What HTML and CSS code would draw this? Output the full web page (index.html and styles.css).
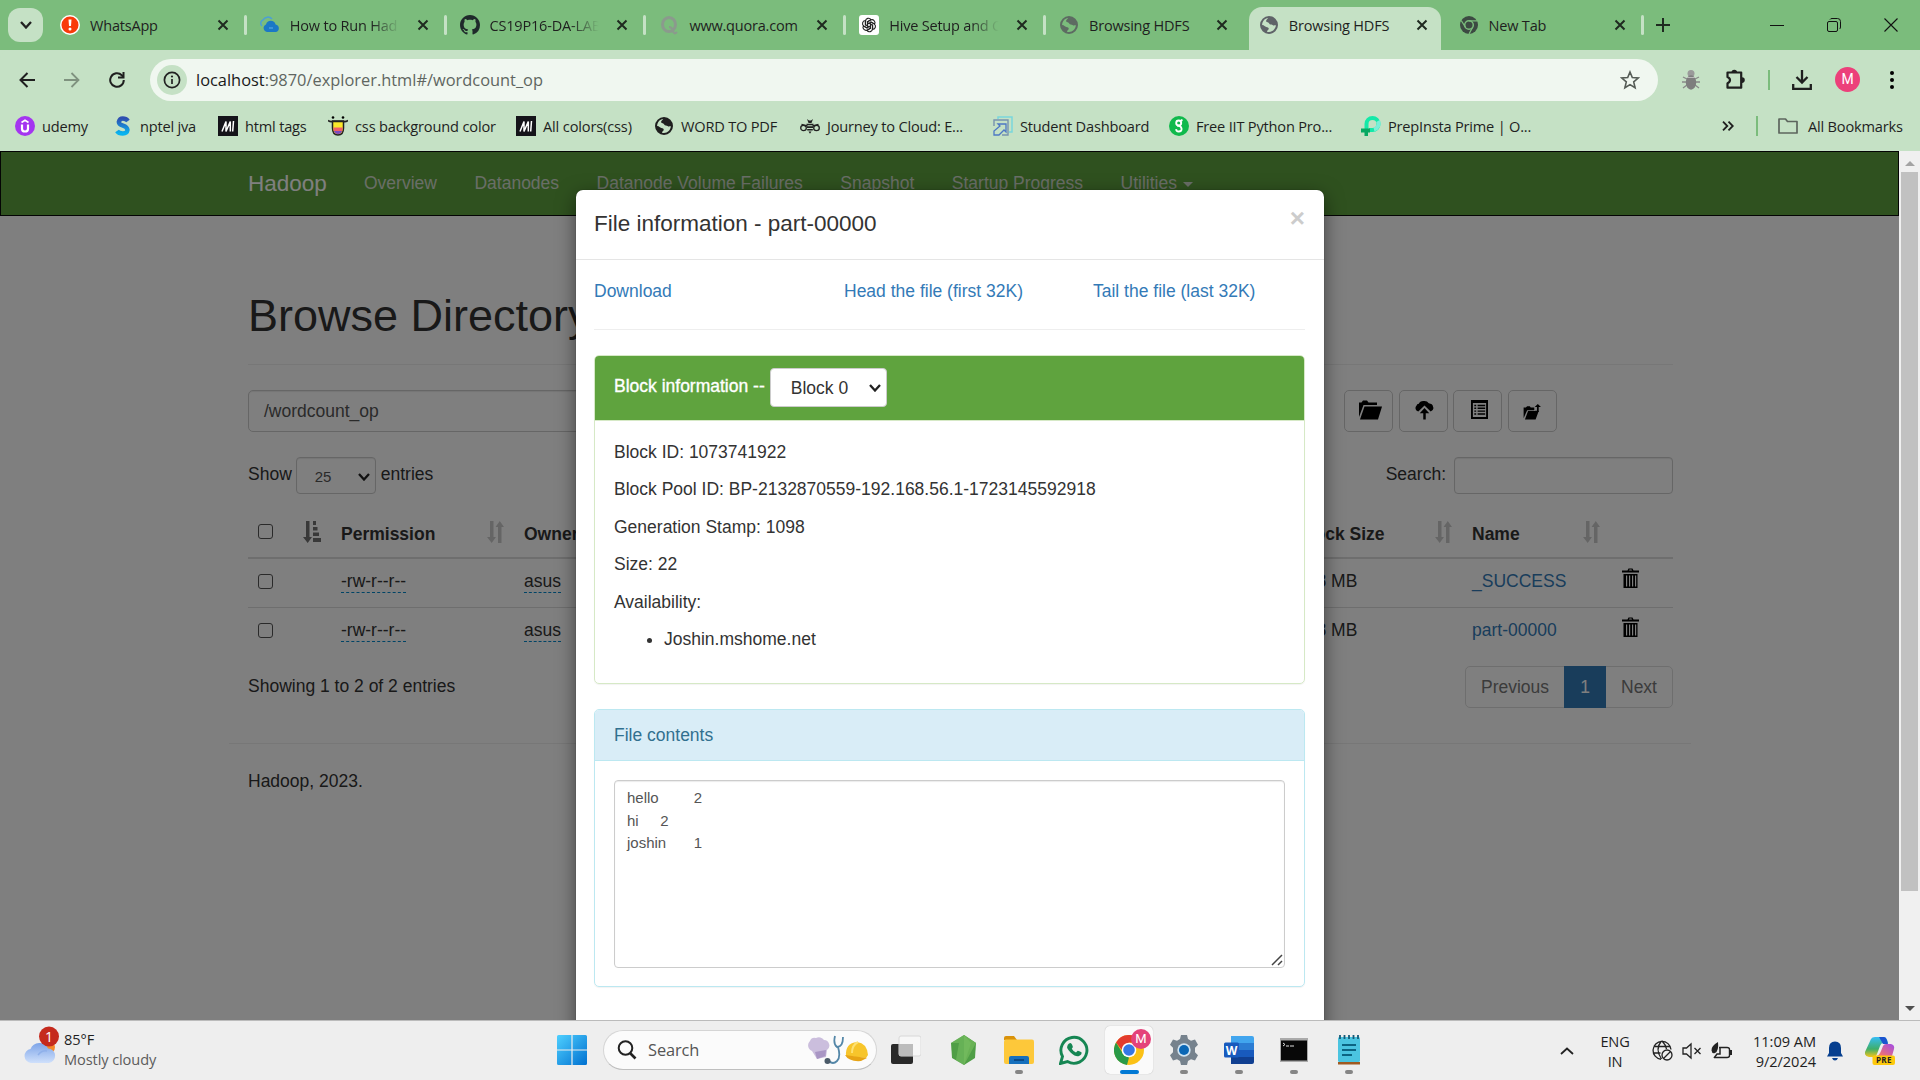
FILE: index.html
```html
<!DOCTYPE html>
<html lang="en">
<head>
<meta charset="utf-8">
<title>Browsing HDFS</title>
<link rel="stylesheet" href="styles.css">
</head>
<body>
<svg class="defs" width="0" height="0" aria-hidden="true">
  <defs>
    <symbol id="x" viewBox="0 0 12 12"><path d="M1.5 1.5l9 9M10.5 1.5l-9 9" stroke="#1f2a20" stroke-width="2" fill="none"/></symbol>
    <symbol id="globe" viewBox="0 0 20 20"><path fill-rule="evenodd" d="M10 1a9 9 0 1 0 0 18a9 9 0 0 0 0-18zM9.200 3c-1 1.500-2.500 2-2 3.600c.500 1.200 2.500.500 3 1.800c.600 1.500 2.600.600 3.400 1.600c.800 1 2.200.200 3.300.300c-.300 3.500-3.200 6.700-6.900 6.700c-.800 0-1.500-.200-2-.300c.200-1.500 1.300-1.600 1.700-2.700c.400-1.300-1.200-2-2.400-2.100c-1.600-.100-1.800-1.800-4.200-1.900C3.200 6.300 5.700 3.300 9.200 3z"/></symbol>
    <symbol id="sort" viewBox="0 0 17 22"><path d="M3 0h3.500v16H9l-4.300 6L0 16h3zM11 22h3.500V6H17l-4.200-6L8.500 6H11z"/></symbol>
    <symbol id="trash" viewBox="0 0 17 20"><path fill-rule="evenodd" d="M5.500 2.500L6.500.500h4l1 2h5.500v2H0v-2zM7 2.500h3l-.500-1h-2zM1.500 6h14v14h-14zM4 7.500v11h1.200v-11zm3 0v11h1.200v-11zm3 0v11h1.200v-11zm3 0v11h1.200v-11z"/></symbol>
    <symbol id="caret" viewBox="0 0 12 8"><path d="M1 1l5 5.500L11 1" fill="none" stroke="#222" stroke-width="2.300"/></symbol>
    <linearGradient id="win" x1="0" y1="0" x2="1" y2="1"><stop offset="0" stop-color="#4fd0ff"/><stop offset="1" stop-color="#0070d0"/></linearGradient>
    <linearGradient id="cloud" x1="0" y1="0" x2="0" y2="1"><stop offset="0" stop-color="#7da4e8"/><stop offset="1" stop-color="#cfe0fb"/></linearGradient>
    <linearGradient id="cop1" x1="0" y1="0" x2="0" y2="1"><stop offset="0" stop-color="#35bdf5"/><stop offset=".6" stop-color="#3fae6a"/><stop offset="1" stop-color="#f4c51c"/></linearGradient>
    <linearGradient id="cop2" x1="1" y1="0" x2="0" y2="1"><stop offset="0" stop-color="#a14be8"/><stop offset="1" stop-color="#ff7a59"/></linearGradient>
    <linearGradient id="nptel" x1="0" y1="0" x2="0" y2="1"><stop offset="0" stop-color="#2f4fb0"/><stop offset="1" stop-color="#08b4f0"/></linearGradient>
  </defs>
</svg>

<header class="browser">
  <div class="tabstrip">
    <div class="tab-search"><svg width="12" height="8"><use href="#caret"/></svg></div>
    <div class="tab"><svg class="fav" viewBox="0 0 20 20"><circle cx="10" cy="10" r="10" fill="#fff"/><circle cx="10" cy="10" r="8.500" fill="#f93a0a"/><path d="M8.500 4.500h3L11 11H9z" fill="#fff"/><circle cx="10" cy="14" r="1.500" fill="#fff"/></svg><span class="tt">WhatsApp</span><svg class="cl"><use href="#x"/></svg></div>
    <div class="tab"><svg class="fav" viewBox="0 0 20 20"><path d="M2 11a3.500 3.500 0 0 1 1-6a5.500 5.500 0 0 1 9-1" fill="none" stroke="#4c9fd6" stroke-width="1.500"/><path d="M7 17a4 4 0 0 1-1-7.600a5 5 0 0 1 9.600 0A3.900 3.900 0 0 1 16 17z" fill="#1b78c6"/><path d="M9 12h4v2H9z" fill="#3d93d8"/></svg><span class="tt fade">How to Run Had</span><svg class="cl"><use href="#x"/></svg></div>
    <div class="tab"><svg class="fav" viewBox="0 0 16 16"><path fill="#1f2a2b" d="M8 0C3.580 0 0 3.580 0 8c0 3.540 2.290 6.530 5.470 7.590.4.070.55-.170.55-.380 0-.190-.010-.820-.010-1.490-2.010.370-2.530-.490-2.690-.940-.090-.230-.480-.940-.820-1.130-.280-.150-.680-.520-.010-.530.630-.010 1.080.580 1.230.820.720 1.210 1.870.870 2.330.660.070-.520.280-.870.510-1.070-1.780-.2-3.640-.890-3.640-3.950 0-.870.310-1.590.820-2.150-.080-.2-.360-1.020.080-2.120 0 0 .670-.210 2.200.820.640-.180 1.320-.270 2-.270s1.360.090 2 .270c1.530-1.040 2.200-.820 2.200-.820.440 1.100.160 1.920.080 2.120.510.560.820 1.270.820 2.150 0 3.070-1.870 3.750-3.650 3.950.290.250.540.730.540 1.480 0 1.070-.010 1.930-.010 2.200 0 .210.150.460.550.380A8.010 8.010 0 0 0 16 8c0-4.420-3.580-8-8-8z"/></svg><span class="tt fade">CS19P16-DA-LAB</span><svg class="cl"><use href="#x"/></svg></div>
    <div class="tab"><svg class="fav" viewBox="0 0 20 20"><ellipse cx="10" cy="9.500" rx="6.500" ry="7" fill="none" stroke="#8b9a8d" stroke-width="3"/><path d="M10 12q3 0 4 4t4 1" fill="none" stroke="#8b9a8d" stroke-width="2.200"/></svg><span class="tt">www.quora.com</span><svg class="cl"><use href="#x"/></svg></div>
    <div class="tab"><svg class="fav" viewBox="0 0 20 20"><rect width="20" height="20" rx="3" fill="#fff"/><g fill="none" stroke="#222" stroke-width="1.100"><path id="petal" d="M6.500 10.500V6.200a3 3 0 0 1 5.500-1.600L8.500 6.700v5"/><use href="#petal" transform="rotate(60 10 10)"/><use href="#petal" transform="rotate(120 10 10)"/><use href="#petal" transform="rotate(180 10 10)"/><use href="#petal" transform="rotate(240 10 10)"/><use href="#petal" transform="rotate(300 10 10)"/></g></svg><span class="tt fade">Hive Setup and C</span><svg class="cl"><use href="#x"/></svg></div>
    <div class="tab before"><svg class="fav" viewBox="0 0 20 20" fill="#5d6b62"><use href="#globe"/></svg><span class="tt">Browsing HDFS</span><svg class="cl"><use href="#x"/></svg></div>
    <div class="tab active"><svg class="fav" viewBox="0 0 20 20" fill="#5f6368"><use href="#globe"/></svg><span class="tt">Browsing HDFS</span><svg class="cl"><use href="#x"/></svg></div>
    <div class="tab final"><svg class="fav" viewBox="0 0 20 20"><circle cx="10" cy="10" r="9" fill="#3c4a42"/><circle cx="10" cy="10" r="4.300" fill="#3c4a42" stroke="#7bbc7c" stroke-width="1.500"/><path d="M10 5.800h8.200M6.300 12L2.200 5.500M13.600 12.200L10 19" stroke="#7bbc7c" stroke-width="1.300"/></svg><span class="tt">New Tab</span><svg class="cl"><use href="#x"/></svg></div>
    <svg class="plus" viewBox="0 0 14 14"><path d="M7 0v14M0 7h14" stroke="#1f2a20" stroke-width="2"/></svg>
    <div class="winctl">
      <svg width="14" height="14"><path d="M0 7.500h14" stroke="#111"/></svg>
      <svg width="14" height="14"><rect x=".5" y="3.500" width="10" height="10" rx="1.500" fill="none" stroke="#111"/><path d="M3 1.500q.5-1 2-1h5.500q3 0 3 3V9q0 1.500-1 2" fill="none" stroke="#111"/></svg>
      <svg width="14" height="14"><path d="M.5.500l13 13M13.500.500l-13 13" stroke="#111" stroke-width="1.100"/></svg>
    </div>
  </div>

  <div class="toolbar">
    <svg class="tb" width="16" height="16" viewBox="0 0 16 16"><path d="M16 8H1.500M8.500 1L1.500 8l7 7" fill="none" stroke="#1f1f1f" stroke-width="2"/></svg>
    <svg class="tb" width="16" height="16" viewBox="0 0 16 16"><path d="M0 8h14.500M7.500 1l7 7l-7 7" fill="none" stroke="#7f927f" stroke-width="1.800"/></svg>
    <svg class="tb" width="16" height="16" viewBox="0 0 16 16"><path d="M14.800 8A6.800 6.800 0 1 1 12.800 3.200L14.500 5" fill="none" stroke="#1f1f1f" stroke-width="2"/><path d="M15.500 0v6.500H9V4.600h4.500V0z" fill="#1f1f1f"/></svg>
    <div class="omnibox">
      <div class="info"><svg width="18" height="18"><circle cx="9" cy="9" r="7.600" fill="none" stroke="#222" stroke-width="1.700"/><path d="M9 8v5" stroke="#222" stroke-width="1.700"/><circle cx="9" cy="5.500" r="1.100" fill="#222"/></svg></div>
      <span class="url"><b>localhost</b>:9870/explorer.html#/wordcount_op</span>
      <svg class="star" width="20" height="20" viewBox="0 0 20 20"><path d="M10 2l2.300 5.500 5.900.500-4.500 3.900 1.400 5.800L10 14.600l-5.100 3.100 1.400-5.800L1.800 8l5.900-.5z" fill="none" stroke="#555c56" stroke-width="1.600"/></svg>
    </div>
    <svg class="bug" width="18" height="20" viewBox="0 0 18 20"><path d="M1 7l4 2M17 7l-4 2M0 12h5M18 12h-5M1 18l4-3M17 18l-4-3" stroke="#888" stroke-width="1.300"/><circle cx="9" cy="3.500" r="3.500" fill="#9a9a9a"/><ellipse cx="9" cy="12.500" rx="5.200" ry="7.200" fill="#7e7e7e"/><path d="M5 7.500h8" stroke="#bbb"/></svg>
    <svg class="puz" width="21" height="21" viewBox="0 0 21 21"><path d="M2.500 3.500h13.700v15.200H2.500v-4.500q2.500-1 2.500-3.100t-2.500-3.100z" fill="none" stroke="#1f1f1f" stroke-width="2.200" stroke-linejoin="round"/><path d="M6.500 3.500a2.800 2.800 0 0 1 5.600 0zM17 8.300a2.800 2.800 0 0 1 0 5.600z" fill="#1f1f1f"/></svg>
    <i class="vbar"></i>
    <svg class="dl" width="20" height="20" viewBox="0 0 20 20"><path d="M10 0v12M4.500 7l5.500 5.500L15.500 7M1.200 14v4.800h17.600V14" fill="none" stroke="#1f1f1f" stroke-width="2.300"/></svg>
    <span class="avatar">M</span>
    <svg class="dots" width="4" height="18"><circle cx="2" cy="2" r="2"/><circle cx="2" cy="9" r="2"/><circle cx="2" cy="16" r="2"/></svg>
  </div>

  <nav class="bookmarks">
    <span class="bm b1"><svg viewBox="0 0 20 20"><circle cx="10" cy="10" r="10" fill="#a435f0"/><path d="M6.500 6.500L10 4.300l3.500 2.200" fill="none" stroke="#fff" stroke-width="1.700"/><path d="M7 8.500v4.200q0 2.800 3 2.800t3-2.800V8.500" fill="none" stroke="#fff" stroke-width="2.200"/></svg>udemy</span>
    <span class="bm b2"><svg viewBox="0 0 20 20"><path d="M15 5Q13 2.500 9.800 2.500T5.800 6q0 2.300 4.200 3.600T14.500 14q-.5 3.500-4.700 3.500T4 15" fill="none" stroke="url(#nptel)" stroke-width="4.400"/></svg>nptel jva</span>
    <span class="bm b3"><svg viewBox="0 0 20 20"><rect width="20" height="20" fill="#15141a"/><path d="M4 15.500L8 5.500v10L12.300 5.500v10M15.500 5l-.8 10.500" fill="none" stroke="#fff" stroke-width="1.500"/></svg>html tags</span>
    <span class="bm b4"><svg viewBox="0 0 20 20"><path d="M4.500 5h11v7q0 7-5.500 7t-5.500-7z" fill="#fbe82b" stroke="#222" stroke-width="1.500"/><path d="M5.300 11.500h9.400q0 6.500-4.700 6.500t-4.700-6.500z" fill="#f0606a"/><path d="M6 15h8q-1 3-4 3t-4-3z" fill="#7a4cc0"/><path d="M0 4.500q2 1.500 4.500 1h11q2.500.5 4.500-1" fill="none" stroke="#222" stroke-width="1.700"/><circle cx="5" cy="1.500" r="1.300"/><circle cx="15" cy="1.500" r="1.300"/></svg>css background color</span>
    <span class="bm b5"><svg viewBox="0 0 20 20"><rect width="20" height="20" fill="#15141a"/><path d="M4 15.500L8 5.500v10L12.300 5.500v10M15.500 5l-.8 10.500" fill="none" stroke="#fff" stroke-width="1.500"/></svg>All colors(css)</span>
    <span class="bm b6"><svg viewBox="0 0 20 20" fill="#1f1f1f"><use href="#globe"/></svg>WORD TO PDF</span>
    <span class="bm b7"><svg viewBox="0 0 20 20"><g fill="none" stroke="#222" stroke-width="1.300"><ellipse cx="3.500" cy="12" rx="2.800" ry="2.600"/><ellipse cx="16.500" cy="12" rx="2.800" ry="2.600"/><path d="M1.500 8.500l6 1.500M18.500 8.500l-6 1.500"/></g><path d="M7 3l2 1.500h2L13 3l-1.500 4h-3zM6.500 7.700h7v1.600h-7zM7 10.300h6v1.600H7zM7.200 12.900h5.600v1.600H7.200zM8.500 15.500h3L10 17.800z" fill="#222"/></svg>Journey to Cloud: E...</span>
    <span class="bm b8"><svg viewBox="0 0 20 20" fill="none"><path d="M5 3V1h14v15h-3" stroke="#79d6dc" stroke-width="1.500"/><path d="M1 10V4h14v15H9" stroke="#7793ae" stroke-width="1.400"/><path d="M1 19v-4l6-5-2-2h8v8l-2-2-5 5z" stroke="#4d78c4" stroke-width="1.300"/></svg>Student Dashboard</span>
    <span class="bm b9"><svg viewBox="0 0 20 20"><circle cx="10" cy="10" r="10" fill="#10b94c"/><g fill="none" stroke="#fff" stroke-width="1.900"><circle cx="9.700" cy="7" r="2.500"/><path d="M12 4.500l1.500-.5M8 9.500q4 0 4.500 3t-2.800 3q-2.700-.2-2.400-2.300"/></g></svg>Free IIT Python Pro...</span>
    <span class="bm b10"><svg viewBox="0 0 20 20"><path d="M5.500 14V8a6 6 0 1 1 6 6H8" fill="none" stroke="#14e9a8" stroke-width="4"/><path d="M17 5a6 6 0 0 1-4 8.500" fill="none" stroke="#7deed9" stroke-width="4"/><path d="M0 12.500h9v4H7v3.500H3.500v-3.500H0z" fill="#07a862"/></svg>PrepInsta Prime | O...</span>
    <svg class="more" width="12" height="10" viewBox="0 0 12 10"><path d="M1 .7L5.300 5 1 9.300M6.500.7L10.800 5 6.500 9.300" fill="none" stroke="#1f1f1f" stroke-width="1.800"/></svg>
    <i class="vbar"></i>
    <span class="bm all"><svg viewBox="0 0 20 20"><path d="M1 3h6.500l2 2.500H19V17H1z" fill="none" stroke="#5d655e" stroke-width="1.700" stroke-linejoin="round"/></svg>All Bookmarks</span>
  </nav>
</header>

<div class="viewport">
  <main class="page">
    <nav class="navbar">
      <span class="brand">Hadoop</span>
      <a>Overview</a><a>Datanodes</a><a>Datanode Volume Failures</a><a>Snapshot</a><a>Startup Progress</a><a>Utilities <i class="tri"></i></a>
    </nav>
    <div class="container">
      <h1>Browse Directory</h1>
      <div class="pathrow">
        <div class="path">/wordcount_op</div>
        <div class="btn"><svg width="23" height="20" viewBox="0 0 23 20"><path d="M0 17V2.500h2.500L4 .5h4l1.500 2H18V5H4.500z"/><path d="M5.500 6.500H23L19 19.500H1z"/></svg></div>
        <div class="btn"><svg width="19" height="20" viewBox="0 0 20 20"><path d="M3.500 11.500A3.600 3.600 0 0 1 1.500 5.500Q2 3.500 4 3.500Q5 0 10 .5Q13 .5 14.500 3Q18.500 3.500 19 6.500Q20.500 10 16.500 11.500L10 5.300z"/><path d="M10 8l5 5.500H11.300V20H8.700v-6.500H5z"/></svg></div>
        <div class="btn"><svg width="17" height="19" viewBox="0 0 18 20"><path fill-rule="evenodd" d="M0 0h18v20H0zM2 3v15h14V3z"/><path d="M3.500 5h2v1.500h-2zm3.500 0h8v1.500H7zM3.500 8h2v1.500h-2zm3.500 0h8v1.500H7zm-3.500 3h2v1.500h-2zm3.500 0h8v1.500H7zm-3.500 3h2v1.500h-2zm3.500 0h8v1.500H7z"/></svg></div>
        <div class="btn cut"><svg width="19" height="16" viewBox="0 0 20 18"><path d="M0 16V4h2.500L4 2.500h3L8 4h4v3H4zM5 8h12l-3.500 9.500H1.500z"/><path d="M16 0l3.500 3.500H17V9h-4V7.500h2v-4h-2.500z"/></svg></div>
      </div>
      <div class="lenrow">
        <span>Show</span><div class="sel small">25<svg width="12" height="8"><use href="#caret"/></svg></div><span>entries</span>
        <label>Search:</label><div class="searchbox"></div>
      </div>
      <div class="table">
        <div class="tr th"><div><i class="chk"></i><svg class="sorted" width="18" height="22" viewBox="0 0 18 22"><path d="M3 0h3.500v16H9l-4.300 6L0 16h3zM10 0h3v4h-3zM10 6h4.500v3.500H10zM10 11.500h6V15h-6zM10 17h8v4h-8z"/></svg></div><div><span>Permission</span><svg class="sort"><use href="#sort"/></svg></div><div><span>Owner</span></div><div><span>Block Size</span><svg class="sort"><use href="#sort"/></svg></div><div><span>Name</span><svg class="sort"><use href="#sort"/></svg></div><div></div></div>
        <div class="tr"><div><i class="chk"></i></div><div><u>-rw-r--r--</u></div><div><u>asus</u></div><div><span>128 MB</span></div><div><a>_SUCCESS</a></div><div><svg class="bin"><use href="#trash"/></svg></div></div>
        <div class="tr last"><div><i class="chk"></i></div><div><u>-rw-r--r--</u></div><div><u>asus</u></div><div><span>128 MB</span></div><div><a>part-00000</a></div><div><svg class="bin"><use href="#trash"/></svg></div></div>
      </div>
      <div class="foot"><span>Showing 1 to 2 of 2 entries</span><div class="pager"><span>Previous</span><b>1</b><span>Next</span></div></div>
      <hr>
      <p class="copy">Hadoop, 2023.</p>
    </div>
    <div class="backdrop">
      <section class="modal">
        <header><h4>File information - part-00000</h4><span class="close">×</span></header>
        <div class="mbody">
          <div class="links"><a>Download</a><a>Head the file (first 32K)</a><a>Tail the file (last 32K)</a></div>
          <div class="panel green">
            <div class="ph"><span>Block information --</span><div class="sel big">Block 0<svg width="12" height="8"><use href="#caret"/></svg></div></div>
            <div class="pb"><p>Block ID: 1073741922</p><p>Block Pool ID: BP-2132870559-192.168.56.1-1723145592918</p><p>Generation Stamp: 1098</p><p>Size: 22</p><p>Availability:</p><ul><li>Joshin.mshome.net</li></ul></div>
          </div>
          <div class="panel blue">
            <div class="ph">File contents</div>
            <div class="pb"><pre class="area">hello	2
hi	2
joshin	1</pre><svg class="grip" width="12" height="12"><path d="M1 11L11 1M7 11l4-4" stroke="#444" stroke-width="1.500"/></svg></div>
          </div>
        </div>
      </section>
    </div>
  </main>
  <div class="scroll"><i class="up"></i><i class="thumb"></i><i class="down"></i></div>
</div>

<footer class="taskbar">
  <div class="weather">
    <svg width="36" height="40" viewBox="0 0 36 40"><circle cx="24" cy="21" r="7" fill="#f58a2b"/><path d="M7 37a7 7 0 0 1-.5-13.900A9.500 9.500 0 0 1 24 22.500A7.300 7.300 0 0 1 25 37z" fill="url(#cloud)"/><path d="M14 29q4-5 9-4" fill="none" stroke="#8fb0ea" stroke-width="1.500"/><circle cx="25" cy="10.500" r="10" fill="#c52a1d"/><text x="25" y="16" text-anchor="middle" class="badge">1</text></svg>
    <div><span>85°F</span><span class="dim">Mostly cloudy</span></div>
  </div>
  <div class="apps">
    <svg class="start" width="30" height="30" viewBox="0 0 30 30" fill="url(#win)"><path d="M0 1.500Q0 0 1.500 0H14.400v14.400H0zM15.600 0H28.500Q30 0 30 1.500v12.900H15.600zM0 15.600h14.400V30H1.500Q0 30 0 28.500zM15.600 15.600H30v12.900q0 1.500-1.500 1.500H15.600z"/></svg>
    <div class="pill">
      <svg width="20" height="20" viewBox="0 0 20 20"><circle cx="8.500" cy="8" r="6.800" fill="none" stroke="#222" stroke-width="2"/><path d="M13 13l5.500 5.500" stroke="#222" stroke-width="2.600"/></svg><span>Search</span>
      <svg class="deco" width="62" height="30" viewBox="0 0 62 30"><path d="M5 16a6 6 0 0 1-2-10a5 5 0 0 1 6-3a6 6 0 0 1 8 2a5.500 5.500 0 0 1 3 10l-1 7-9 2z" fill="#cbbedd"/><path d="M8 17l11-2-.5 6-8.500 3z" fill="#a996c4"/><path d="M28 1q-2 8 2 11q6 0 6-10M31 12q3 10-1 14q-4 4-8 0" fill="none" stroke="#5487a8" stroke-width="1.800"/><circle cx="20.500" cy="26" r="3" fill="#4a5a68"/><path d="M39 21Q38 8 50 7q10 1 11 13l-2 3z" fill="#f7c52b"/><path d="M38 20l22 3-6 3q-12 1-16-6z" fill="#e7a415"/><path d="M45 18q0-8 6-11" fill="none" stroke="#fde173" stroke-width="2"/></svg>
    </div>
    <div class="app first"><svg viewBox="0 0 30 30"><rect y="9" width="22" height="20" rx="2" fill="#292929"/><rect x="8" y="1" width="22" height="20" rx="2" fill="#f7f7f7" stroke="#d8d8d8"/><path d="M8 9h14v12H8z" fill="#bcbcbc"/></svg></div>
    <div class="app"><svg viewBox="0 0 30 30"><path d="M15 0l12 8-1 15-11 7L3 23 2 8z" fill="#4f9e46"/><path d="M15 0l12 8-12 22z" fill="#69b255"/><path d="M15 0L2 8l8 0-3 17 8 5 7-22z" fill="#77be60" opacity=".6"/></svg></div>
    <div class="app run"><svg viewBox="0 0 30 30"><path d="M0 3q0-2 2-2h8l3 4H0z" fill="#d9920a"/><rect y="4.500" width="30" height="24.500" rx="2" fill="#fdc83a"/><path d="M5 29v-6q0-2 2-2h16q2 0 2 2v6z" fill="#1670bd"/><path d="M10 25h10" stroke="#0a4a88" stroke-width="2"/></svg></div>
    <div class="app"><svg viewBox="0 0 30 30"><path d="M1.500 28.500l2-7A13 13 0 1 1 8.500 26.600z" fill="none" stroke="#168653" stroke-width="2.900"/><path d="M10 8.500q2-1.500 3 1l.8 2q.3 1-1 2.200q1.300 2.500 4.200 3.800l1.400-1.600q.8-.6 4.100 1.400q.5 2.500-2.500 3.800q-3.500 1-8.200-3.400T8.300 11.300Q8.500 9.500 10 8.500z" fill="#168653"/></svg></div>
    <div class="app cur"><svg viewBox="0 0 30 30"><circle cx="15" cy="15" r="15" fill="#fbc116"/><path d="M2 7.500A15 15 0 0 1 28 7.500H15L11 19z" fill="#e33b2e"/><path d="M2 7.500l7.500 12L15 22.500 13 30A15 15 0 0 1 2 7.500z" fill="#2a9a48"/><circle cx="15" cy="15" r="7.300" fill="#fff"/><circle cx="15" cy="15" r="5.800" fill="#3577e5"/></svg><em>M</em></div>
    <div class="app run"><svg viewBox="0 0 30 30"><path d="M12 0h6l1 4 3 1.700 4-1.200 3 5.200-3 3v4.600l3 3-3 5.200-4-1.200L19 26l-1 4h-6l-1-4-3-1.700-4 1.200-3-5.200 3-3v-4.600l-3-3 3-5.200 4 1.200L11 4z" fill="#76828d"/><circle cx="15" cy="15" r="6.700" fill="#cfe4f3"/><circle cx="15" cy="15" r="5" fill="#0b67b5"/></svg></div>
    <div class="app run"><svg viewBox="0 0 30 30"><path d="M7 1h21q2 0 2 2v6H7z" fill="#41a5ee"/><path d="M7 8h23v7H7z" fill="#2b7cd3"/><path d="M7 15h23v7H7z" fill="#185abd"/><path d="M7 22h23v5q0 2-2 2H7z" fill="#103f91"/><rect y="7.500" width="15" height="15" rx="1.500" fill="#185abd"/><text x="7.500" y="20" text-anchor="middle" class="word">W</text></svg></div>
    <div class="app run"><svg viewBox="0 0 30 30"><rect x="1" y="3" width="28" height="24" fill="#aaa"/><rect x="2" y="5.500" width="26" height="20" fill="#080808"/><path d="M4 8l2 1.500L4 11M7 11h3M11 11h4" fill="none" stroke="#ddd"/></svg></div>
    <div class="app run"><svg viewBox="0 0 30 30"><rect x="4" y="2" width="22" height="25" rx="1.500" fill="#4bc4e0"/><path d="M4 27h22v2.500H4z" fill="#a05a22"/><path d="M6 0v4M10.500 0v4M15 0v4M19.500 0v4M24 0v4" stroke="#145a78" stroke-width="1.800"/><path d="M8 10h14M8 15h14M8 20h10" stroke="#0c6482" stroke-width="2"/></svg></div>
  </div>
  <div class="tray">
    <svg width="14" height="8"><path d="M1 7l6-5.500L13 7" fill="none" stroke="#222" stroke-width="1.800"/></svg>
    <div class="lang"><span>ENG</span><span>IN</span></div>
    <svg width="21" height="21" viewBox="0 0 21 21" fill="none" stroke="#222" stroke-width="1.300"><path d="M9 19.300A9 9 0 1 1 19 9.500M9.500 1q-7 8 0 18M10 1q4 4 4.500 8M1.500 6.500h17M1.500 13h7"/><circle cx="15" cy="15" r="5"/><path d="M11.500 18.500l7-7"/></svg>
    <svg class="mute" width="20" height="18" viewBox="0 0 20 18" fill="none" stroke="#222" stroke-width="1.300"><path d="M1 6h3.500L9 2v14l-4.500-4H1zM12.500 6l6 6M18.500 6l-6 6"/></svg>
    <svg class="bat" width="21" height="18" viewBox="0 0 21 18"><path d="M8 5.500h8q2.500 0 2.500 2v6q0 2-2.500 2H4" fill="none" stroke="#222" stroke-width="1.400"/><path d="M19 8h2v5h-2zM7 0Q0 4 .5 8.500Q1 12 4 11Q8 9 7 0z" fill="#222"/><path d="M9 6v6H6L3 16" fill="none" stroke="#222" stroke-width="1.500"/></svg>
    <div class="clock"><span>11:09 AM</span><span>9/2/2024</span></div>
    <svg class="bell" width="16" height="20" viewBox="0 0 16 20"><path d="M8 .5q6 0 6 6.500v5l2 3.500H0L2 12V7Q2 .5 8 .5zM5 17h6q-1 2.500-3 2.500T5 17z" fill="#063f8f"/></svg>
    <svg class="cop" width="30" height="30" viewBox="0 0 30 30"><path d="M6 3Q7 1 10 1h9q2 0 3 3l1 3h-5q-2 0-3 3l-3 8q-1 3-4 3H4q-5-1-4-5z" fill="url(#cop1)"/><path d="M14 1h5q2 0 3 3l1 4h-5z" fill="#1b54cf"/><path d="M21 8h5q4 1 3 5l-2 7H11q3 0 5-5l2-5q1-2 3-2z" fill="url(#cop2)"/><rect x="7.500" y="19.500" width="22.500" height="9.500" rx="2" fill="#fdc90c"/><text x="18.900" y="27.200" text-anchor="middle" class="pre">PRE</text></svg>
  </div>
</footer>
</body>
</html>
```
FILE: styles.css
```css
* { box-sizing: border-box; }
body { margin: 0; width: 1920px; height: 1080px; overflow: hidden; display: flex; flex-direction: column; font-family: "Open Sans", "Noto Sans", sans-serif; color: #1f1f1f; }
svg { flex: none; display: block; }
.defs { position: absolute; }

/* browser frame */
.browser { height: 151px; background: #c5e1c5; flex: none; }
.tabstrip { height: 50px; background: #7bbc7c; display: flex; align-items: center; padding-left: 8px; }
.tab-search { width: 35px; height: 34px; border-radius: 12px; background: #c5e1c5; display: flex; align-items: center; justify-content: center; margin-right: 4px; }
.tab { width: 199.8px; height: 50px; flex: none; display: flex; align-items: center; padding: 0 18px 0 13px; position: relative; }
.tab.final { width: 198px; }
.tab::after { content: ""; position: absolute; right: 0; top: 15px; width: 3px; height: 20px; border-radius: 2px; background: #c5e1c5; }
.tab.before::after, .tab.active::after { display: none; }
.fav { width: 20px; height: 20px; margin-right: 10px; }
.tt { flex: 1; font-size: 14.5px; letter-spacing: -0.2px; white-space: nowrap; margin-right: 14px; }
.tt.fade { -webkit-mask-image: linear-gradient(90deg, #000 72%, transparent 97%); mask-image: linear-gradient(90deg, #000 72%, transparent 97%); }
.cl { width: 12px; height: 12px; }
.tab.active::before { content: ""; position: absolute; z-index: 0; left: 3px; right: 5px; top: 7px; bottom: 0; border-radius: 13px 13px 0 0; background: #c5e1c5; }
.tab.active > * { position: relative; }
.plus { width: 14px; height: 14px; margin-left: 12px; }
.winctl { margin-left: auto; display: flex; gap: 43px; padding-right: 22px; }
.toolbar { height: 59px; border-radius: 10px 10px 0 0; display: flex; align-items: center; padding: 0 26px 0 19px; background: #c5e1c5; }
.tb { margin-right: 29px; }
.tb + .tb + .tb { margin-right: 24px; }
.omnibox { width: 1508px; flex: none; height: 42px; border-radius: 21px; background: #f0f7f0; display: flex; align-items: center; padding: 0 18px 0 7px; margin-left: 1px; }
.info { width: 30px; height: 30px; border-radius: 50%; background: #c5e1c5; display: flex; align-items: center; justify-content: center; }
.url { margin-left: 9px; flex: 1; font-size: 16.4px; color: #5f6661; }
.url b { font-weight: 400; color: #1a1a1a; }
.bug { margin-left: 24px; }
.puz { margin-left: 25px; }
.vbar { width: 2px; height: 20px; background: #7bbc7c; }
.toolbar .vbar { margin: 0 22px; }
.avatar { width: 25px; height: 25px; border-radius: 50%; background: #ec407a; color: #fff; font: 14px/25px Roboto, sans-serif; text-align: center; margin: 0 30px 0 23px; }
.bookmarks { height: 34px; display: flex; align-items: center; padding-left: 15px; }
.bm { display: flex; align-items: center; font-size: 14.6px; line-height: 20px; letter-spacing: -0.2px; white-space: nowrap; flex: none; margin-top: -1px; }
.bm svg { width: 20px; height: 20px; margin-right: 7px; }
.b1 { width: 98px; } .b2 { width: 105px; } .b3 { width: 110px; } .b4 { width: 188px; } .b5 { width: 138px; }
.b6 { width: 146px; } .b7 { width: 193px; } .b8 { width: 176px; } .b9 { width: 192px; } .b10 { width: 361px; }
.b4, .b5 { letter-spacing: -0.15px; }
.bookmarks .vbar { margin: 0 20px 0 22px; }
.bm.all svg { margin-right: 10px; }

/* HDFS explorer */
.viewport { height: 869px; display: flex; flex: none; font: 17.5px/25px "Liberation Sans", Arial, sans-serif; color: #333; }
.page { width: 1899px; height: 869px; position: relative; overflow: hidden; background: #fff; }
.page a { color: #337ab7; }
.page .navbar { height: 65px; border: 1px solid #080808; background: #5fa33e; display: flex; padding: 19px 0 0 247px; }
.navbar .brand { font-size: 22.5px; color: #fff; margin-right: 37px; width: 79px; }
.page .navbar a { color: #d3dccf; margin-right: 37.5px; }
.tri { display: inline-block; border: 5px solid transparent; border-top-color: #d3dccf; border-bottom: 0; vertical-align: 2px; margin-left: 1px; }
.container { width: 1425px; margin-left: 248px; }
h1 { margin: 75px 0 25px; padding-bottom: 23px; height: 74px; border-bottom: 1px solid #eee; font-size: 45px; line-height: 49.5px; font-weight: 500; }
.pathrow { display: flex; height: 42px; gap: 5.5px; }
.path { width: 1070px; margin-right: 20.5px; border: 1px solid #ccc; border-radius: 5px; padding: 8px 15px; box-shadow: inset 0 1px 1px rgba(0,0,0,.08); color: #555; }
.btn { width: 49px; border: 1px solid #ccc; border-radius: 5px; display: flex; align-items: center; justify-content: center; }
.btn svg { margin: -3px 0 0 3px; }
.btn.cut svg { margin: 1px 0 0 0; }
.lenrow { margin-top: 25px; height: 37px; display: flex; line-height: 34px; }
.sel { display: flex; align-items: center; justify-content: space-between; border: 1px solid #ccc; border-radius: 4px; background: #fff; }
.sel.small { width: 80px; height: 37px; margin: 0 5px 0 4px; padding: 2px 5px 0 18px; font-size: 15px; color: #555; box-shadow: inset 0 1px 1px rgba(0,0,0,.08); }
.lenrow label { margin-left: auto; margin-right: 8px; }
.searchbox { width: 219px; border: 1px solid #ccc; border-radius: 4px; box-shadow: inset 0 1px 1px rgba(0,0,0,.08); }
.table { margin-top: 17px; }
.tr { display: grid; grid-template-columns: 93px 183px 773px 175px 150px 51px; height: 49px; padding-top: 9px; border-bottom: 1px solid #ddd; }
.tr.th { height: 48px; padding-top: 10px; border-bottom-width: 2px; font-weight: 700; }
.tr.last { border: 0; }
.tr > div { display: flex; align-items: flex-start; }
.tr span, .tr u, .tr a { margin-top: 1px; }
.chk { width: 15px; height: 15px; border: 1.5px solid #555; border-radius: 3px; margin: 6px 0 0 10px; background: #fff; }
.th .chk { margin-top: 3px; }
.sorted { margin-left: 30px; opacity: .55; }
.sort { width: 17px; height: 22px; margin-left: auto; margin-right: 20px; opacity: .2; }
.tr.th > div:nth-child(5) .sort { margin-right: 22px; }
.tr u { text-decoration: none; line-height: 22px; padding-top: 1px; height: 24px; border-bottom: 1px dashed #08c; }
.bin { width: 17px; height: 20px; }
.foot { display: flex; justify-content: space-between; margin-top: 9px; height: 42px; }
.foot > span { padding-top: 8px; }
.pager { display: flex; line-height: 40px; border: 1px solid #ddd; border-radius: 5px; width: 208px; color: #777; }
.pager span:first-child { width: 98px; padding-left: 15px; }
.pager b { width: 42px; margin: -1px 0; line-height: 42px; background: #337ab7; color: #fff; font-weight: 400; text-align: center; }
.pager span:last-child { padding-left: 15px; }
.container hr { border: 0; border-top: 1px solid #eee; margin: 35px -18px 25px -19px; }
.copy { margin: 0; }
.backdrop { position: absolute; inset: 0; background: rgba(0,0,0,.5); padding: 39px 0 0 576px; }
.modal { width: 748px; height: 900px; background: #fff; border-radius: 7px 7px 0 0; box-shadow: 0 6px 19px rgba(0,0,0,.5), 0 0 1px rgba(0,0,0,.6); }
.modal header { height: 70px; border-bottom: 1px solid #e5e5e5; display: flex; justify-content: space-between; padding: 17px 20px 0 18px; }
h4 { margin: 0; font-size: 22.5px; line-height: 33px; font-weight: 500; }
.close { font: 700 26px/22px "Liberation Sans", Arial, sans-serif; color: #ccc; margin-right: -1px; }
.mbody { padding: 19px 19px 0 18px; }
.links { display: grid; grid-template-columns: 250px 249px 1fr; height: 51px; border-bottom: 1px solid #eee; margin-bottom: 25px; }
.panel { border: 1px solid #d6e9c6; border-radius: 5px; box-shadow: 0 1px 1px rgba(0,0,0,.05); overflow: hidden; margin-bottom: 25px; }
.green { height: 329px; }
.green .ph { background: #5fa33e; color: #fff; height: 65px; border-bottom: 1px solid #d6e9c6; display: flex; padding: 12px 19px; -webkit-text-stroke: .35px #fff; }
.green .ph > span { padding-top: 6px; margin-right: 5px; }
.sel.big { width: 117px; height: 39px; color: #333; padding: 1px 5px 0 20px; -webkit-text-stroke: 0; }
.pb { padding: 19px; position: relative; }
.green .pb { padding-top: 18.5px; }
.pb p { margin: 0 0 12.5px; }
.pb ul { margin: 0; padding-left: 50px; }
.blue { height: 278px; border-color: #bce8f1; }
.blue .ph { background: #d9edf7; color: #31708f; border-bottom: 1px solid #bce8f1; height: 51px; padding: 13px 19px; }
.area { margin: 0; height: 188px; border: 1px solid #ccc; border-radius: 4px; padding: 6px 12px; font: 15px/22.6px "Liberation Sans", Arial, sans-serif; color: #555; box-shadow: inset 0 1px 1px rgba(0,0,0,.08); }
.grip { position: absolute; right: 21px; bottom: 21px; }
.scroll { width: 21px; background: #f0f0f0; display: flex; flex-direction: column; align-items: center; padding: 10px 0 9px; }
.up { border: 5px solid transparent; border-top: 0; border-bottom-color: #a3a3a3; }
.thumb { width: 17px; height: 719px; background: #c1c1c1; margin-top: 6px; }
.down { margin-top: auto; border: 5px solid transparent; border-bottom: 0; border-top-color: #505050; }

/* taskbar */
.taskbar { height: 60px; flex: none; background: #eee; border-top: 1px solid #bbb; display: flex; font-size: 14.6px; line-height: 20px; }
.weather { width: 558px; display: flex; padding: 5px 0 0 24px; gap: 4px; flex: none; }
.weather span, .lang span, .clock span { display: block; }
.weather div { letter-spacing: -0.1px; padding-top: 3px; }
.dim { color: #5c5c5c; }
.badge { font: 14px "Open Sans", sans-serif; fill: #fff; }
.apps { display: flex; align-items: center; width: 1002px; flex: none; }
.start { margin: 0 16px 2px -1px; }
.pill { width: 274px; height: 40px; border: 1px solid #d5d5d5; border-bottom-color: #bfbfbf; border-radius: 20px; background: #fbfbfb; display: flex; align-items: center; padding: 0 7px 0 13px; margin: 0 5px 2px 0; }
.pill span { font-size: 16.4px; letter-spacing: -.1px; color: #555; margin-left: 11px; }
.deco { margin-left: auto; }
.app { width: 48px; height: 48px; margin: 0 7px 1px 0; border-radius: 5px; display: flex; align-items: center; justify-content: center; position: relative; flex: none; }
.app.first { margin-right: 10px; }
.app svg { width: 30px; height: 30px; }
.app.run::after, .app.cur::after { content: ""; position: absolute; bottom: 0; width: 8px; height: 4px; border-radius: 2px; background: #858585; }
.app.cur::after { width: 19px; background: #0078d4; }
.app.cur { background: #fafafa; box-shadow: 0 0 1px #aaa; }
.app em { position: absolute; right: 2px; top: 3px; width: 20px; height: 20px; border-radius: 50%; background: #e4427a; color: #fff; font: 13px/20px Roboto, sans-serif; text-align: center; }
.word { font: 700 12px "Open Sans", sans-serif; fill: #fff; }
.pre { font: 700 8px "Open Sans", sans-serif; fill: #222; letter-spacing: .4px; }
.tray { display: flex; align-items: center; }
.lang { width: 40px; text-align: center; margin: 0 17px 0 21px; letter-spacing: -.2px; }
.mute { margin-left: 9px; }
.bat { margin-left: 9px; }
.clock { width: 72px; text-align: right; margin: 0 11px 0 12px; white-space: nowrap; letter-spacing: -.05px; }
.cop { margin-left: 22px; }
```
